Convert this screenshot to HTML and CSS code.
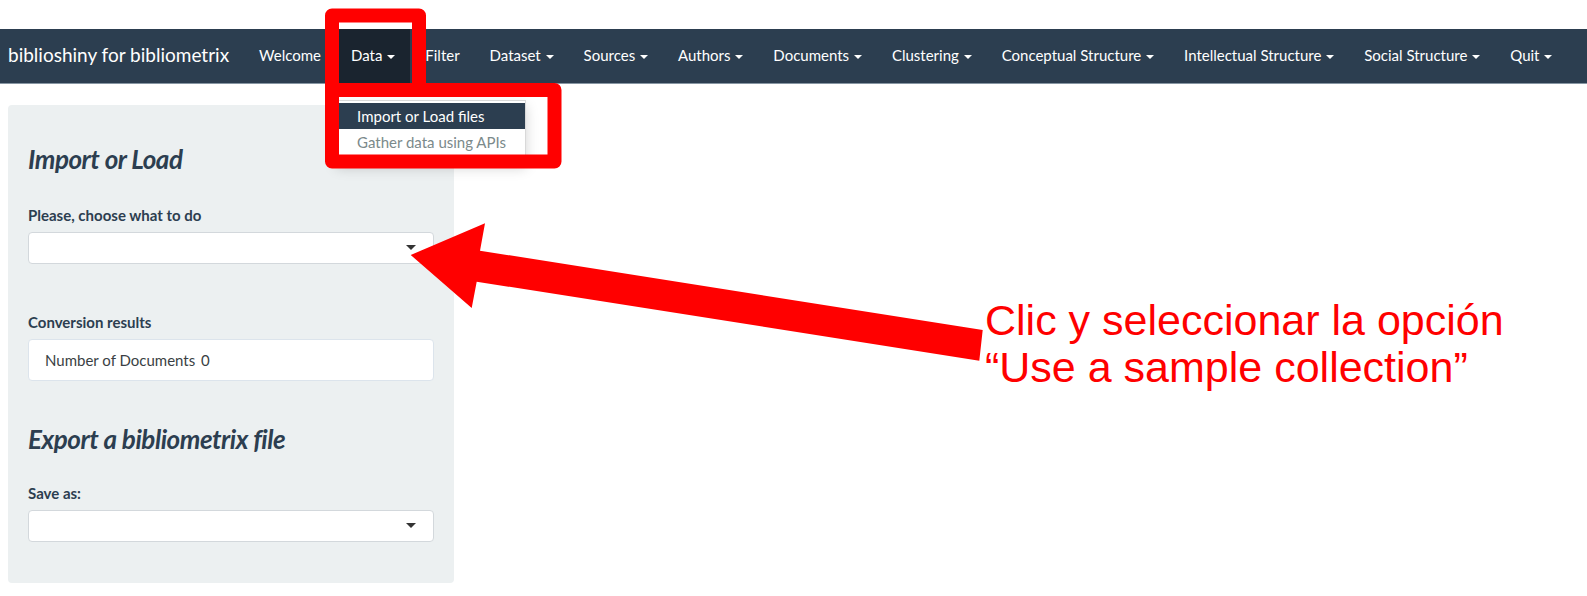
FILE: index.html
```html
<!DOCTYPE html>
<html lang="en">
<head>
<meta charset="utf-8">
<title>biblioshiny for bibliometrix</title>
<link rel="stylesheet" href="styles.css">
</head>
<body>
<div class="page">
  <nav class="navbar">
    <div class="brand">biblioshiny for bibliometrix</div>
    <ul class="nav">
      <li><a>Welcome</a></li>
      <li class="dropdown active"><a>Data <span class="caret"></span></a>
        <ul class="dropdown-menu">
          <li class="selected"><a>Import or Load files</a></li>
          <li><a>Gather data using APIs</a></li>
        </ul>
      </li>
      <li><a>Filter</a></li>
      <li><a>Dataset <span class="caret"></span></a></li>
      <li><a>Sources <span class="caret"></span></a></li>
      <li><a>Authors <span class="caret"></span></a></li>
      <li><a>Documents <span class="caret"></span></a></li>
      <li><a>Clustering <span class="caret"></span></a></li>
      <li><a>Conceptual Structure <span class="caret"></span></a></li>
      <li><a>Intellectual Structure <span class="caret"></span></a></li>
      <li><a>Social Structure <span class="caret"></span></a></li>
      <li><a>Quit <span class="caret"></span></a></li>
    </ul>
  </nav>

  <main class="content">
    <aside class="well">
      <h3 class="heading heading-first">Import or Load</h3>
      <label class="lbl lbl-first">Please, choose what to do</label>
      <div class="select"><span class="select-caret"></span></div>
      <label class="lbl lbl-conv">Conversion results</label>
      <pre class="result">Number of Documents <span class="count">0</span></pre>
      <h3 class="heading heading-export">Export a bibliometrix file</h3>
      <label class="lbl lbl-save">Save as:</label>
      <div class="select"><span class="select-caret"></span></div>
    </aside>
  </main>

  <svg class="annot" width="1587" height="596" viewBox="0 0 1587 596" xmlns="http://www.w3.org/2000/svg">
    <rect x="332" y="15.5" width="87" height="74.5" fill="none" stroke="#ff0000" stroke-width="14" stroke-linejoin="round"/>
    <rect x="332" y="90" width="222.5" height="71.5" fill="none" stroke="#ff0000" stroke-width="14" stroke-linejoin="round"/>
    <polygon points="410.7,255 485,223.3 480,250.7 982.7,330 979.3,360.7 476.7,281.7 471.7,308" fill="#ff0000"/>
  </svg>
  <div class="note">Clic y seleccionar la opción<br>“Use a sample collection”</div>
</div>
</body>
</html>
```

FILE: styles.css
```css
html, body {
  margin: 0;
  padding: 0;
  background: #ffffff;
}

body {
  font-family: Lato, "Open Sans", "Liberation Sans", sans-serif;
  font-size: 15px;
  color: #2c3e50;
}

.page {
  position: relative;
  width: 1587px;
  height: 596px;
  padding-top: 29px;
  box-sizing: border-box;
  overflow: hidden;
}

/* ---------- navbar ---------- */
.navbar {
  display: flex;
  align-items: stretch;
  height: 54px;
  background: #2c3e50;
  border-bottom: 1px solid #8796a3;
}

.brand {
  padding: 0 15px 0 8px;
  font-size: 19px;
  line-height: 52px;
  color: #ffffff;
  white-space: nowrap;
}

.nav {
  display: flex;
  margin: 0;
  padding: 0;
  list-style: none;
}

.nav > li > a {
  display: block;
  height: 54px;
  padding: 0 15px;
  line-height: 52px;
  color: #ffffff;
  font-size: 15px;
  white-space: nowrap;
}

.nav > li.active > a {
  background: #1a242f;
}

.caret {
  display: inline-block;
  width: 0;
  height: 0;
  margin-left: 1px;
  vertical-align: middle;
  border-top: 4px solid #ffffff;
  border-left: 4px solid transparent;
  border-right: 4px solid transparent;
}

.dropdown {
  position: relative;
}

.dropdown-menu {
  position: absolute;
  top: calc(100% + 17px);
  left: 0;
  z-index: 5;
  width: 188px;
  margin: 0;
  padding: 2px 0 6px;
  list-style: none;
  background: #ffffff;
  border: 1px solid rgba(0, 0, 0, 0.15);
  box-shadow: 0 6px 12px rgba(0, 0, 0, 0.175);
}

.dropdown-menu > li > a {
  display: block;
  padding: 3px 20px;
  line-height: 20px;
  font-size: 15px;
  color: #7b8a8b;
  white-space: nowrap;
}

.dropdown-menu > li.selected > a {
  background: #2c3e50;
  color: #ffffff;
}

/* ---------- content ---------- */
.content {
  padding: 21px 0 0 8px;
}

.well {
  display: flex;
  flex-direction: column;
  width: 446px;
  height: 478px;
  box-sizing: border-box;
  padding: 0 20px;
  background: #ecf0f1;
  border-radius: 4px;
}

.heading {
  margin: 0;
  font-size: 26px;
  line-height: 28px;
  font-style: italic;
  font-weight: 700;
  color: #2c3e50;
  letter-spacing: -0.45px;
}

.heading-first {
  margin-top: 40px;
}

.heading-export {
  margin-top: 44px;
}

.lbl {
  display: block;
  font-size: 15px;
  line-height: 21px;
  font-weight: 700;
  color: #2c3e50;
  margin-bottom: 6px;
}

.lbl-first {
  margin-top: 32px;
}

.lbl-conv {
  margin-top: 48px;
}

.lbl-save {
  margin-top: 30px;
}

.select {
  display: flex;
  align-items: center;
  justify-content: flex-end;
  height: 32px;
  box-sizing: border-box;
  padding-right: 17px;
  background: #ffffff;
  border: 1px solid #d3d8dc;
  border-radius: 4px;
}

.select-caret {
  width: 0;
  height: 0;
  margin-top: -1px;
  border-top: 5px solid #333333;
  border-left: 5px solid transparent;
  border-right: 5px solid transparent;
}

.result {
  margin: 0;
  height: 42px;
  box-sizing: border-box;
  padding: 10px 16px;
  font-family: Lato, "Open Sans", "Liberation Sans", sans-serif;
  font-size: 15px;
  line-height: 20px;
  color: #3a3f44;
  white-space: pre;
  background: #ffffff;
  border: 1px solid #dce4ec;
  border-radius: 4px;
}

.count {
  margin-left: 2px;
}

/* ---------- annotations ---------- */
.annot {
  position: absolute;
  top: 0;
  left: 0;
  z-index: 10;
  pointer-events: none;
}

.note {
  position: absolute;
  top: 297px;
  left: 985px;
  z-index: 11;
  font-family: "Liberation Sans", Arial, sans-serif;
  font-size: 43px;
  line-height: 47px;
  color: #ff0000;
  white-space: nowrap;
}
```
